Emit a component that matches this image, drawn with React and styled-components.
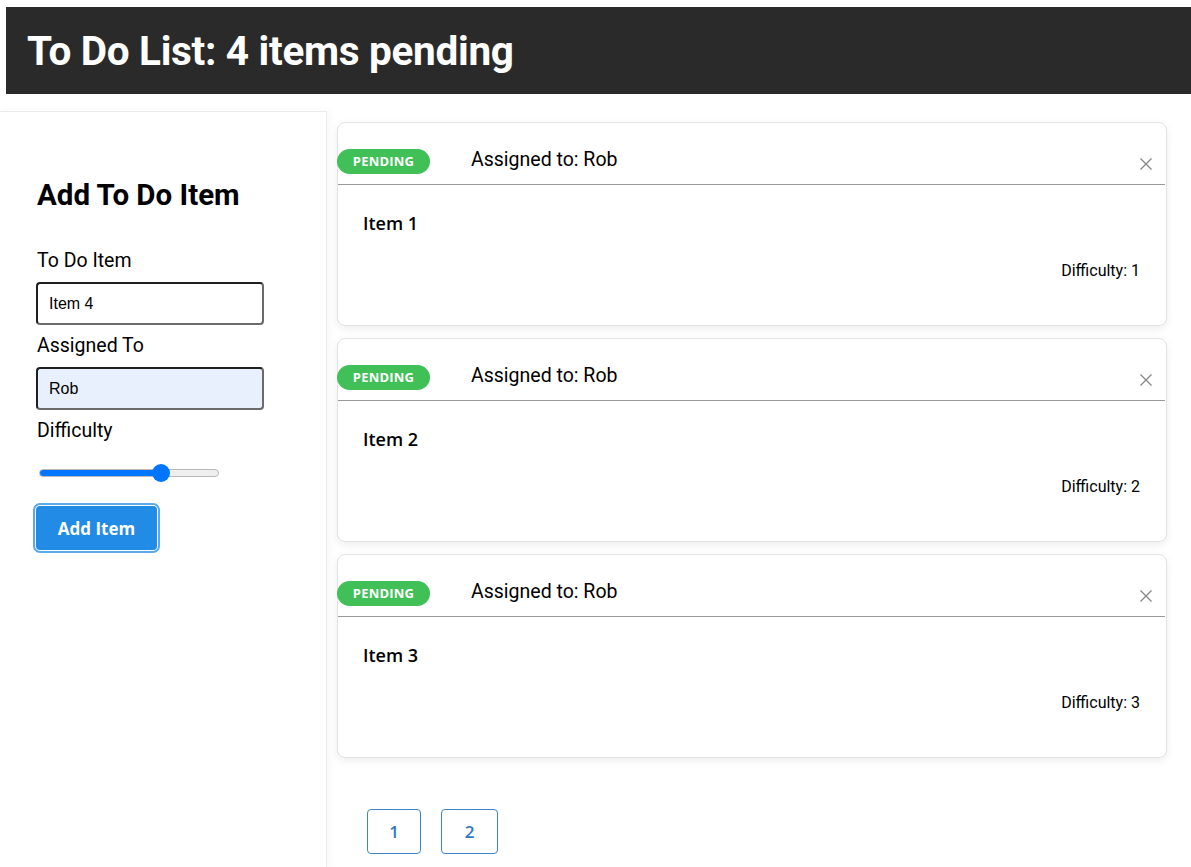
import styled, { createGlobalStyle } from "styled-components";

const GlobalStyle = createGlobalStyle`
  html, body {
    margin: 0;
    padding: 0;
    background: #fff;
    font-family: Roboto, "Liberation Sans", sans-serif;
    color: #000;
  }
  * { box-sizing: border-box; }
`;

const Page = styled.div`
  min-height: 100vh;
  display: flex;
  flex-direction: column;
`;

const Header = styled.header`
  margin: 7px 0 0 6px;
  height: 87px;
  background: #2b2a2a;
  display: flex;
  align-items: center;
  padding-left: 21px;
`;

const Title = styled.h1`
  margin: 0;
  color: #fff;
  font-family: Roboto, sans-serif;
  font-weight: 700;
  font-size: 40.5px;
  letter-spacing: -0.3px;
`;

const Body = styled.div`
  flex: 1;
  display: flex;
  margin-top: 17px;
`;

const Sidebar = styled.aside`
  width: 327px;
  flex-shrink: 0;
  border-top: 1px solid #ebebeb;
  border-right: 1px solid #ebebeb;
  box-shadow: 3px 0 8px rgba(0, 0, 0, 0.03);
  padding: 66px 36px 0 36px;
  background: #fff;
  position: relative;
  z-index: 1;
`;

const FormTitle = styled.h2`
  margin: 0 0 37px 1px;
  font-family: Roboto, sans-serif;
  font-weight: 700;
  font-size: 29.5px;
  line-height: 34px;
`;

const Label = styled.label`
  display: block;
  margin: 9px 0 9px 1px;
  font-family: Roboto, sans-serif;
  font-size: 19.5px;
  line-height: 24px;
`;

const TextInput = styled.input`
  display: block;
  width: 228px;
  height: 43px;
  padding: 0 11px;
  border: 2px solid #6b6b6b;
  border-top-color: #1f1f1f;
  border-left-color: #1f1f1f;
  border-radius: 4px;
  background: ${(p) => (p.$filled ? "#e8f0fe" : "#fff")};
  font-family: "Liberation Sans", Arial, sans-serif;
  font-size: 16px;
  color: #000;
  outline: none;
`;

const Range = styled.input`
  -webkit-appearance: none;
  appearance: none;
  display: block;
  width: 180px;
  height: 18px;
  margin: 21px 0 24px 3px;
  background: transparent;

  &::-webkit-slider-runnable-track {
    height: 8px;
    border-radius: 4px;
    border: 1px solid #b9b9b9;
    background: linear-gradient(
      to right,
      #0075ff 0,
      #0075ff var(--fill),
      #efefef var(--fill),
      #efefef 100%
    );
  }
  &::-webkit-slider-thumb {
    -webkit-appearance: none;
    width: 18px;
    height: 18px;
    margin-top: -6px;
    border-radius: 50%;
    background: #0075ff;
    border: none;
  }
`;

const AddButton = styled.button`
  display: block;
  width: 121px;
  height: 44px;
  border: none;
  border-radius: 4px;
  background: #228be6;
  color: #fff;
  font-family: "Open Sans", sans-serif;
  font-weight: 700;
  font-size: 17px;
  box-shadow: 0 0 0 1px #fff, 0 0 0 3px #5aa9ec;
  cursor: pointer;
`;

const Main = styled.main`
  flex: 1;
  background: #fff;
  padding: 11px 24px 0 10px;
`;

const CardList = styled.div`
  display: flex;
  flex-direction: column;
  gap: 12px;
`;

const Card = styled.div`
  height: 204px;
  background: #fff;
  border: 1px solid #e3e3e3;
  border-radius: 8px;
  box-shadow: 0 3px 9px rgba(0, 0, 0, 0.07);
  display: flex;
  flex-direction: column;
`;

const CardHead = styled.div`
  height: 62px;
  display: flex;
  align-items: center;
  padding: 15px 0 0 0;
  border-bottom: 1px solid #9a9a9a;
  margin-right: 1px;
`;

const Badge = styled.span`
  margin-left: -1px;
  width: 93px;
  height: 25px;
  border-radius: 13px;
  background: #40c057;
  color: #fff;
  font-family: "Open Sans", sans-serif;
  font-weight: 700;
  font-size: 13px;
  display: flex;
  align-items: center;
  justify-content: center;
  letter-spacing: 0.2px;
`;

const Assignee = styled.span`
  margin-left: 41px;
  font-family: Roboto, sans-serif;
  font-size: 19.5px;
  margin-top: -3px;
`;

const CloseButton = styled.button`
  margin-left: auto;
  margin-right: 9px;
  margin-top: 6px;
  width: 20px;
  height: 20px;
  padding: 0;
  border: none;
  background: none;
  display: flex;
  align-items: center;
  justify-content: center;
  cursor: pointer;
`;

const CardBody = styled.div`
  flex: 1;
  display: flex;
  flex-direction: column;
  padding: 26px 26px 0 25px;
`;

const ItemName = styled.div`
  font-family: "Open Sans", sans-serif;
  font-weight: 600;
  font-size: 18px;
  line-height: 24px;
`;

const Difficulty = styled.div`
  align-self: flex-end;
  margin-top: 24px;
  font-family: Roboto, sans-serif;
  font-size: 16px;
  line-height: 24px;
`;

const Pager = styled.div`
  display: flex;
  gap: 20px;
  margin: 51px 0 0 30px;
`;

const PageButton = styled.button`
  width: ${(p) => p.$w}px;
  height: 45px;
  border: 1px solid #3d86c6;
  border-radius: 4px;
  background: #fff;
  color: #2f78bd;
  font-family: "Open Sans", sans-serif;
  font-weight: 600;
  font-size: 17px;
  cursor: pointer;
`;

const todos = [
  { name: "Item 1", who: "Rob", difficulty: 1 },
  { name: "Item 2", who: "Rob", difficulty: 2 },
  { name: "Item 3", who: "Rob", difficulty: 3 },
];

function CloseIcon() {
  return (
    <svg width="14" height="14" viewBox="0 0 14 14">
      <path d="M1.5 1.5 L12.5 12.5 M12.5 1.5 L1.5 12.5" stroke="#8a8a8a" strokeWidth="1.4" fill="none" />
    </svg>
  );
}

export default function App() {
  const value = 70;
  return (
    <>
      <GlobalStyle />
      <Page>
        <Header>
          <Title>To Do List: 4 items pending</Title>
        </Header>
        <Body>
          <Sidebar>
            <FormTitle>Add To Do Item</FormTitle>
            <Label>To Do Item</Label>
            <TextInput defaultValue="Item 4" />
            <Label>Assigned To</Label>
            <TextInput defaultValue="Rob" $filled />
            <Label>Difficulty</Label>
            <Range
              type="range"
              min="0"
              max="100"
              defaultValue={value}
              style={{ "--fill": `${value}%` }}
            />
            <AddButton>Add Item</AddButton>
          </Sidebar>
          <Main>
            <CardList>
              {todos.map((t) => (
                <Card key={t.name}>
                  <CardHead>
                    <Badge>PENDING</Badge>
                    <Assignee>Assigned to: {t.who}</Assignee>
                    <CloseButton>
                      <CloseIcon />
                    </CloseButton>
                  </CardHead>
                  <CardBody>
                    <ItemName>{t.name}</ItemName>
                    <Difficulty>Difficulty: {t.difficulty}</Difficulty>
                  </CardBody>
                </Card>
              ))}
            </CardList>
            <Pager>
              <PageButton $w={54}>1</PageButton>
              <PageButton $w={57}>2</PageButton>
            </Pager>
          </Main>
        </Body>
      </Page>
    </>
  );
}
